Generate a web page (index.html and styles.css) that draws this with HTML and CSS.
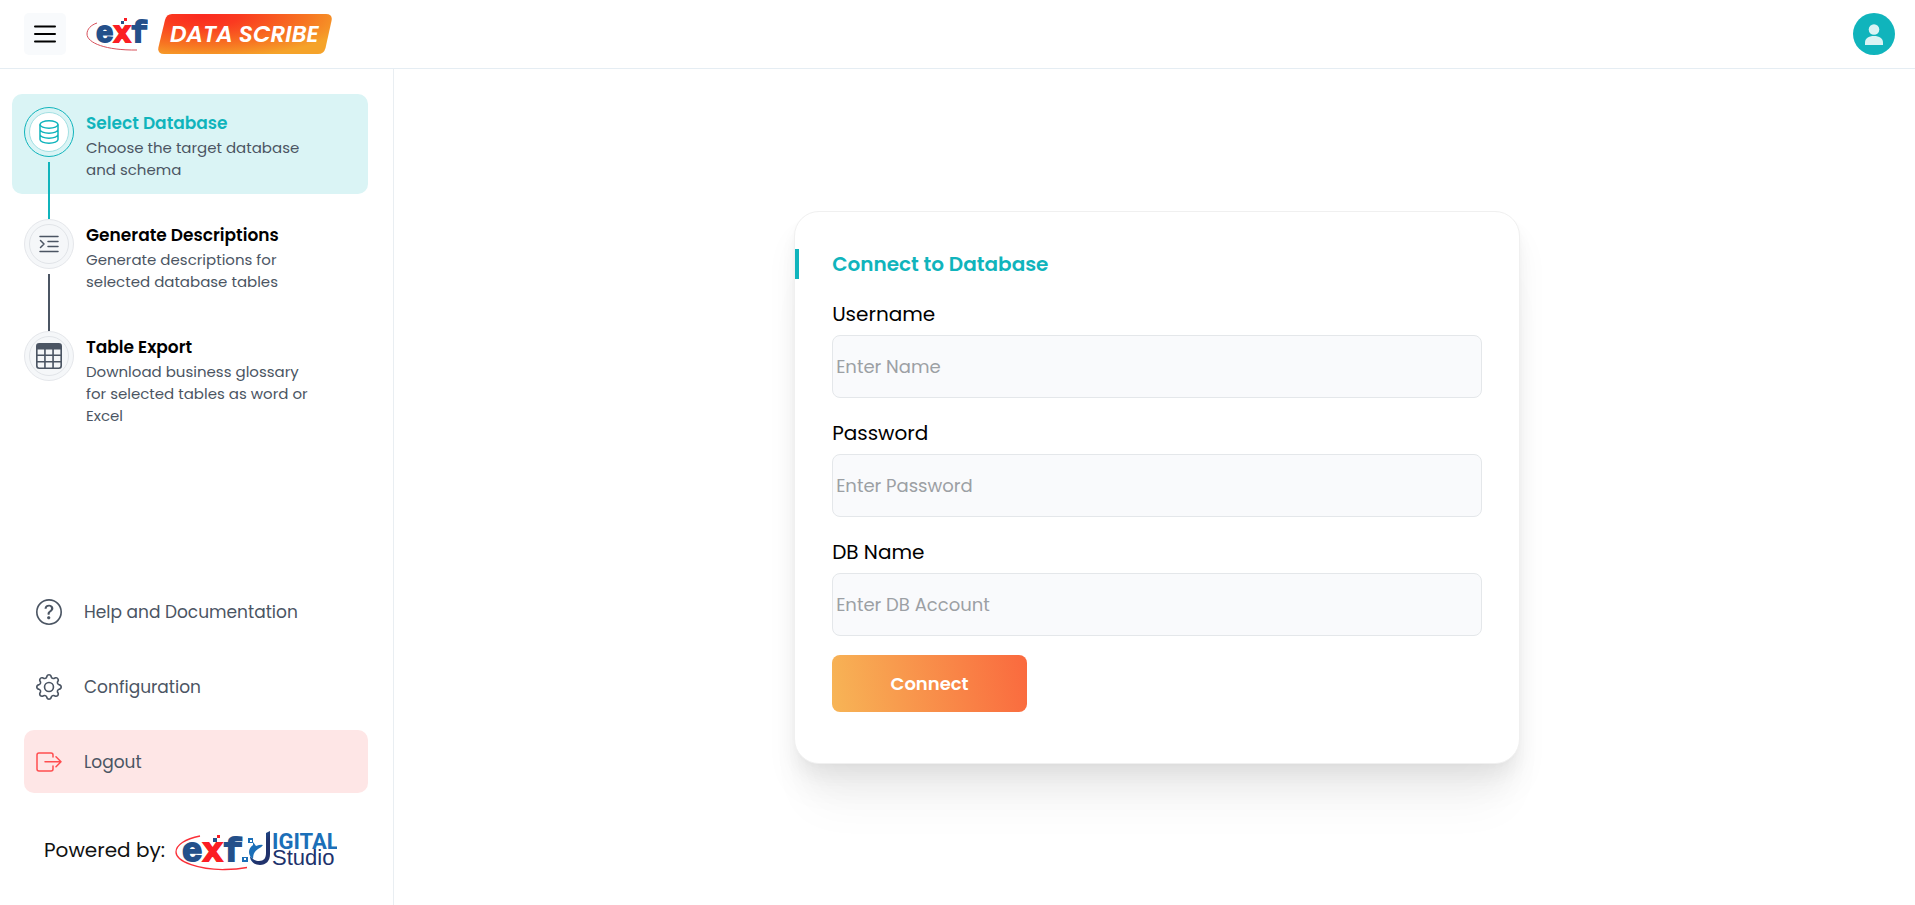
FILE: index.html
```html
<!DOCTYPE html>
<html lang="en">
<head>
    <meta charset="UTF-8">
    <meta name="viewport" content="width=device-width, initial-scale=1.0">
    <title>Data Scribe</title>
    <link rel="stylesheet" href="styles.css">
</head>
<body>
    <header class="topbar">
        <button class="menu-btn" type="button" aria-label="Toggle menu">
            <svg width="22" height="18" viewBox="0 0 22 18" fill="none" stroke="#000" stroke-width="2" stroke-linecap="round">
                <path d="M1 1.5h20M1 9h20M1 16.5h20"/>
            </svg>
        </button>
        <a class="brand" href="#" aria-label="exf Data Scribe">
            <svg width="62" height="36" viewBox="0 0 62 36">
                <path d="M11 7C5 9 1 13 1 18 1 27 20 34.500 51 34" fill="none" stroke="#d8505a"/>
                <text x="10" y="26" class="exf-text exf-small"><tspan fill="#24508a" stroke="#24508a">e</tspan><tspan fill="#fb1d24" stroke="#fb1d24">x</tspan><tspan fill="#24508a" stroke="#24508a">f</tspan></text>
                <path d="M35 5h3v3h-3z" fill="#24508a"/>
                <path d="M38 2h3v3h-3z" fill="#fb1d24"/>
            </svg>
            <svg width="174" height="40" viewBox="0 0 174 40">
                <defs>
                    <radialGradient id="flame" gradientUnits="userSpaceOnUse" cx="0" cy="0" r="1" gradientTransform="translate(44 2) scale(150 42)">
                        <stop offset="0" stop-color="#fb2a20"/>
                        <stop offset=".25" stop-color="#fa3a20"/>
                        <stop offset=".7" stop-color="#f77522"/>
                        <stop offset="1" stop-color="#f5a32a"/>
                    </radialGradient>
                </defs>
                <path d="M14 0H168Q175 0 173.500 7L167.500 34Q166 40 160 40H6Q-1 40 .5 33L7 6Q8.500 0 14 0z" fill="url(#flame)"/>
                <text x="12" y="28" class="badge-text">DATA SCRIBE</text>
            </svg>
        </a>
        <button class="avatar" type="button" aria-label="Account">
            <svg width="18" height="21" viewBox="0 0 18 21" fill="#daf3f4">
                <circle cx="9" cy="5.500" r="5.300"/>
                <path d="M0 21v-2.500C0 14.500 3.500 12 9 12s9 2.500 9 6.500V21z"/>
            </svg>
        </button>
    </header>

    <div class="layout">
        <aside class="sidebar">
            <ol class="steps">
                <li class="step active">
                    <span class="step-icon"><span>
                        <svg width="20" height="24" viewBox="0 0 20 24" fill="none" stroke="currentColor" stroke-width="1.500">
                            <ellipse cx="10" cy="4.500" rx="9" ry="3.700"/>
                            <path d="M1 4.500v15c0 2 4 3.700 9 3.700s9-1.700 9-3.700v-15M1 9.500c0 2 4 3.700 9 3.700s9-1.700 9-3.700M1 14.500c0 2 4 3.700 9 3.700s9-1.700 9-3.700"/>
                        </svg>
                    </span></span>
                    <a href="#">
                        <strong>Select Database</strong>
                        <small>Choose the target database and schema</small>
                    </a>
                </li>
                <li class="step">
                    <span class="step-icon"><span>
                        <svg width="20" height="18" viewBox="0 0 20 18" fill="none" stroke="currentColor" stroke-width="1.500" stroke-linecap="round" stroke-linejoin="round">
                            <path d="M1 1.500h18M9 6.500h10M9 11.500h10M1 16.500h18M1.500 5.500L5 9l-3.500 3.500"/>
                        </svg>
                    </span></span>
                    <a href="#">
                        <strong>Generate Descriptions</strong>
                        <small>Generate descriptions for selected database tables</small>
                    </a>
                </li>
                <li class="step">
                    <span class="step-icon"><span>
                        <svg width="26" height="26" viewBox="0 0 16 16" fill="currentColor">
                            <path d="M0 2a2 2 0 0 1 2-2h12a2 2 0 0 1 2 2v12a2 2 0 0 1-2 2H2a2 2 0 0 1-2-2zm15 2h-4v3h4zm0 4h-4v3h4zm0 4h-4v3h3a1 1 0 0 0 1-1zm-5 3v-3H6v3zm-5 0v-3H1v2a1 1 0 0 0 1 1zm-4-4h4V8H1zm0-4h4V4H1zm5-3v3h4V4zm4 4H6v3h4z"/>
                        </svg>
                    </span></span>
                    <a href="#">
                        <strong>Table Export</strong>
                        <small>Download business glossary for selected tables as word or Excel</small>
                    </a>
                </li>
            </ol>

            <nav class="links">
                <a href="#">
                    <svg width="26" height="26" viewBox="0 0 16 16" fill="currentColor">
                        <path d="M8 15A7 7 0 1 1 8 1a7 7 0 0 1 0 14m0 1A8 8 0 1 0 8 0a8 8 0 0 0 0 16"/>
                        <path d="M5.255 5.786a.237.237 0 0 0 .241.247h.825c.138 0 .248-.113.266-.25.090-.656.540-1.134 1.342-1.134.686 0 1.314.343 1.314 1.168 0 .635-.374.927-.965 1.371-.673.489-1.206 1.060-1.168 1.987l.003.217a.25.25 0 0 0 .25.246h.811a.25.25 0 0 0 .25-.25v-.105c0-.718.273-.927 1.010-1.486.609-.463 1.244-.977 1.244-2.056 0-1.511-1.276-2.241-2.673-2.241-1.267 0-2.655.590-2.750 2.286m1.557 5.763c0 .533.425.927 1.010.927.609 0 1.028-.394 1.028-.927 0-.552-.420-.940-1.029-.940-.584 0-1.009.388-1.009.940"/>
                    </svg>
                    Help and Documentation
                </a>
                <a href="#">
                    <svg width="26" height="26" viewBox="0 0 16 16" fill="currentColor">
                        <path d="M8 4.754a3.246 3.246 0 1 0 0 6.492 3.246 3.246 0 0 0 0-6.492M5.754 8a2.246 2.246 0 1 1 4.492 0 2.246 2.246 0 0 1-4.492 0"/>
                        <path d="M9.796 1.343c-.527-1.790-3.065-1.790-3.592 0l-.094.319a.873.873 0 0 1-1.255.520l-.292-.160c-1.640-.892-3.433.902-2.540 2.541l.159.292a.873.873 0 0 1-.520 1.255l-.319.094c-1.790.527-1.790 3.065 0 3.592l.319.094a.873.873 0 0 1 .520 1.255l-.160.292c-.892 1.640.901 3.434 2.541 2.540l.292-.159a.873.873 0 0 1 1.255.520l.094.319c.527 1.790 3.065 1.790 3.592 0l.094-.319a.873.873 0 0 1 1.255-.520l.292.160c1.640.893 3.434-.902 2.540-2.541l-.159-.292a.873.873 0 0 1 .520-1.255l.319-.094c1.790-.527 1.790-3.065 0-3.592l-.319-.094a.873.873 0 0 1-.520-1.255l.160-.292c.893-1.640-.902-3.433-2.541-2.540l-.292.159a.873.873 0 0 1-1.255-.520zm-2.633.283c.246-.835 1.428-.835 1.674 0l.094.319a1.873 1.873 0 0 0 2.693 1.115l.291-.160c.764-.415 1.600.420 1.184 1.185l-.159.292a1.873 1.873 0 0 0 1.116 2.692l.318.094c.835.246.835 1.428 0 1.674l-.319.094a1.873 1.873 0 0 0-1.115 2.693l.160.291c.415.764-.420 1.600-1.185 1.184l-.291-.159a1.873 1.873 0 0 0-2.693 1.116l-.094.318c-.246.835-1.428.835-1.674 0l-.094-.319a1.873 1.873 0 0 0-2.692-1.115l-.292.160c-.764.415-1.600-.420-1.184-1.185l.159-.291A1.873 1.873 0 0 0 1.945 8.930l-.319-.094c-.835-.246-.835-1.428 0-1.674l.319-.094A1.873 1.873 0 0 0 3.060 4.377l-.160-.292c-.415-.764.420-1.600 1.185-1.184l.292.159a1.873 1.873 0 0 0 2.692-1.115z"/>
                    </svg>
                    Configuration
                </a>
                <a class="logout" href="#">
                    <svg width="26" height="20" viewBox="0 0 26 20" fill="none" stroke="#ff4d4f" stroke-width="1.500" stroke-linecap="round" stroke-linejoin="round">
                        <path d="M17 5V3Q17 1 15 1H3Q1 1 1 3v14q0 2 2 2h12q2 0 2-2v-3M9 9.800h16M20 4.800l5 5-5 5"/>
                    </svg>
                    Logout
                </a>
            </nav>

            <footer class="powered">
                Powered by:
                <svg width="162" height="44" viewBox="0 0 162 44" role="img" aria-label="exf Digital Studio">
                    <defs>
                        <linearGradient id="dGrad" x1="0" y1="0" x2="1" y2="1">
                            <stop offset="0" stop-color="#1b7cc8"/>
                            <stop offset=".6" stop-color="#20326c"/>
                        </linearGradient>
                    </defs>
                    <path d="M25 8C10 11 1 17 1 24 1 34 25 42 50 41.500q12 0 22-2" fill="none" stroke="#fb3038" stroke-width="1.300"/>
                    <text x="7" y="33" class="exf-text"><tspan fill="#24508a" stroke="#24508a">e</tspan><tspan fill="#fb1d24" stroke="#fb1d24">x</tspan><tspan fill="#24508a" stroke="#24508a">f</tspan></text>
                    <path d="M38 10h4v4h-4z" fill="#24508a"/>
                    <path d="M42 7h3v3h-3z" fill="#fb1d24"/>
                    <path d="M67 29h6v5h-6zM73 10h5v5h-5z" fill="#1b6fb8"/>
                    <path d="M69 30h2v2h-2zM75 12h2v2h-2z" fill="#fff"/>
                    <path d="M78 14l3 4q5-2 7-1-1 2-5 4-5 3-5 10-4-3-4-7 0-4 4-7z" fill="#1b6fb8"/>
                    <path d="M91 5l4-2v23c0 7-4 11-10 11-6 0-10-4-10-9 3 4 6 5 9 5 5 0 7-3 7-8z" fill="url(#dGrad)"/>
                    <text x="97" y="21" class="digital-text">IGITAL</text>
                    <text x="97" y="37" class="studio-text">Studio</text>
                </svg>
            </footer>
        </aside>

        <main class="content">
            <form class="card">
                <h2>Connect to Database</h2>
                <label for="username">Username</label>
                <input id="username" type="text" placeholder="Enter Name">
                <label for="password">Password</label>
                <input id="password" type="password" placeholder="Enter Password">
                <label for="dbname">DB Name</label>
                <input id="dbname" type="text" placeholder="Enter DB Account">
                <button type="button">Connect</button>
            </form>
        </main>
    </div>
</body>
</html>
```
FILE: styles.css
```css
*{
    box-sizing: border-box;
}
body{
    margin: 0;
    min-height: 100vh;
    display: flex;
    flex-direction: column;
    background-color: #fff;
    color: #000;
    font-family: Poppins, Inter, sans-serif;
}
a{
    color: inherit;
    text-decoration: none;
}
button{
    border: 0;
    font-family: inherit;
    cursor: pointer;
}
svg{
    flex-shrink: 0;
}

/* header */
.topbar{
    height: 69px;
    padding: 0 20px 0 24px;
    display: flex;
    align-items: center;
    gap: 20px;
    border-bottom: 1px solid #e5edf3;
}
.menu-btn{
    width: 42px;
    height: 42px;
    padding: 0;
    display: grid;
    place-items: center;
    border-radius: 5px;
    background-color: #f8fafc;
}
.brand{
    display: flex;
    align-items: center;
    gap: 10px;
}
.exf-text{
    font: bold 34px "Liberation Mono", monospace;
    stroke-width: 2px;
}
.exf-small{
    font-size: 29px;
}
.badge-text{
    font-size: 23px;
    font-weight: 600;
    font-style: italic;
    fill: #fff;
}
.avatar{
    width: 42px;
    height: 42px;
    margin-left: auto;
    padding: 0;
    display: grid;
    place-items: center;
    border-radius: 50%;
    background-color: #10b4bc;
}

/* sidebar */
.layout{
    flex: 1;
    display: flex;
}
.sidebar{
    width: 394px;
    flex-shrink: 0;
    padding: 25px 25px 33px 12px;
    display: flex;
    flex-direction: column;
    border-right: 1px solid #e9eef2;
    color: #4b5563;
}
.steps{
    margin: 0;
    padding: 0;
    list-style: none;
    display: flex;
    flex-direction: column;
    gap: 12px;
}
.step{
    position: relative;
    min-height: 100px;
    padding: 13px 12px;
    display: flex;
    gap: 12px;
    border-radius: 10px;
}
.step a{
    width: 230px;
    padding-top: 3px;
}
.step strong{
    display: block;
    color: #000;
    font-size: 17px;
    font-weight: 600;
    line-height: 26px;
}
.step small{
    display: block;
    margin-top: 1px;
    font-size: 15px;
    line-height: 22px;
}
.step-icon{
    width: 50px;
    height: 50px;
    flex-shrink: 0;
    padding: 4px;
    border: 1px solid #e5e7eb;
    border-radius: 50%;
    background-color: #f5f7f9;
}
.step-icon span{
    height: 100%;
    display: grid;
    place-items: center;
    border: 1px solid #e1e4e8;
    border-radius: 50%;
}
.active{
    background-color: #daf4f5;
}
.active strong,
.active .step-icon{
    color: #10b4bc;
}
.active .step-icon{
    border-color: #10b4bc;
    background-color: #daf4f5;
}
.active .step-icon span{
    border-color: #a3e0e3;
    background-color: #fff;
}
/* line that runs down to the next step */
.step:not(:last-child)::after{
    content: "";
    position: absolute;
    left: 36px;
    top: 68px;
    width: 2px;
    height: 57px;
    background-color: #4b5563;
}
.active:not(:last-child)::after{
    background-color: #10b4bc;
}
.links{
    margin-top: auto;
    padding-left: 12px;
    display: flex;
    flex-direction: column;
    gap: 12px;
}
.links a{
    height: 63px;
    padding: 0 12px;
    display: flex;
    align-items: center;
    gap: 22px;
    border-radius: 10px;
    font-size: 17px;
}
.links .logout{
    background-color: #fee6e6;
}
.powered{
    margin-top: 35px;
    padding-left: 32px;
    display: flex;
    align-items: center;
    gap: 10px;
    color: #111;
    font-size: 20px;
}
.digital-text{
    font: bold 22px Roboto, sans-serif;
    fill: #1b6fb8;
}
.studio-text{
    font: 22px "Liberation Sans", sans-serif;
    fill: #20326c;
}

/* connection form */
.content{
    flex: 1;
    padding: 24px 2px 24px 7px;
    display: flex;
    align-items: center;
    justify-content: center;
}
.card{
    width: 48%;
    min-width: 400px;
    padding: 37px 37px 51px;
    border: 1px solid #f0f0f0;
    border-radius: 25px;
    background-color: #fff;
    box-shadow: 0 2px 4px rgba(0,0,0,.02), 0 12px 16px rgba(0,0,0,.04), 0 24px 32px rgba(0,0,0,.05), 0 56px 48px -16px rgba(0,0,0,.04);
}
.card h2{
    margin: 0 -37px;
    padding-left: 33px;
    border-left: 4px solid #10b4bc;
    color: #10b4bc;
    font-size: 20px;
    font-weight: 600;
    line-height: 30px;
}
.card label{
    display: block;
    margin: 21px 0 7px;
    font-size: 20px;
    line-height: 28px;
}
.card input{
    display: block;
    width: 100%;
    height: 63px;
    padding: 0 3px;
    border: 1px solid #e4e7ea;
    border-radius: 8px;
    background-color: #f9fafc;
    font-family: inherit;
    font-size: 18px;
}
.card input::placeholder{
    color: #9ca0a4;
}
.card button{
    width: 30%;
    height: 57px;
    margin-top: 19px;
    border-radius: 8px;
    background: linear-gradient(80deg, #f7b556, #fa693e);
    color: #fff;
    font-size: 18px;
    font-weight: 600;
}
```
